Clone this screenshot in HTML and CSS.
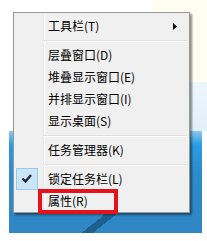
FILE: index.html
```html
<!DOCTYPE html>
<html>
<head>
<meta charset="utf-8">
<link rel="stylesheet" href="styles.css">
</head>
<body>
<div class="scene">
  <div class="menu">
    <div class="item">
      <span></span>
      <span class="label">工具栏(T)</span>
      <svg class="arrow" width="4" height="7" viewBox="0 0 4 7"><path d="M0 0 L4 3.5 L0 7 Z" fill="#000"/></svg>
    </div>
    <div class="sep"></div>
    <div class="item"><span></span><span class="label">层叠窗口(D)</span></div>
    <div class="item"><span></span><span class="label">堆叠显示窗口(E)</span></div>
    <div class="item"><span></span><span class="label">并排显示窗口(I)</span></div>
    <div class="item"><span></span><span class="label">显示桌面(S)</span></div>
    <div class="sep"></div>
    <div class="item"><span></span><span class="label">任务管理器(K)</span></div>
    <div class="sep"></div>
    <div class="item">
      <span class="check"><svg width="20" height="20" viewBox="0 0 20 20"><path d="M5.5 9.5 L8.5 12.5 L14 6" fill="none" stroke="#1b2a3a" stroke-width="2.4"/></svg></span>
      <span class="label">锁定任务栏(L)</span>
    </div>
    <div class="item marked"><span></span><span class="label">属性(R)</span><span class="highlight"></span></div>
  </div>
</div>
</body>
</html>
```

FILE: styles.css
```css
* { box-sizing: border-box; }
html, body { margin: 0; padding: 0; background: #fff; }
.scene {
  width: 207px;
  height: 241px;
  padding: 12px 0 0 13px;
  overflow: hidden;
  background:
    linear-gradient(141deg, transparent 42%, #1f5f8f 42%, #1f5f8f 60%, transparent 60%) 80px 213px / 38px 20px no-repeat,
    linear-gradient(#8cc8ee, #2a9ce2 14px, #2d8ccd 40%, #2f86c3) 9px 131px / 193px 102px no-repeat,
    linear-gradient(#eef6fc, #e2f0fa) 150px 82px / 57px 49px no-repeat,
    linear-gradient(#fffcf0, #fffcf0) 152px 0 / 55px 82px no-repeat,
    #fff;
}
.menu {
  width: 177px;
  height: 201px;
  padding-top: 2px;
  border: 1px solid #979797;
  background:
    linear-gradient(to right, transparent 29px, #e2e3e3 29px, #e2e3e3 30px, #fff 30px, #fff 31px, transparent 31px),
    #f0f0f0;
  box-shadow: 2px 2px 2px rgba(0, 0, 0, 0.45);
  font-family: "Noto Sans CJK SC", "Microsoft YaHei", sans-serif;
  font-size: 12px;
  color: #000;
}
.item {
  position: relative;
  height: 22px;
  display: grid;
  grid-template-columns: 22px 1fr auto;
  column-gap: 10px;
  align-items: center;
  padding: 0 12px 0 2px;
}
.label {
  line-height: 22px;
  white-space: nowrap;
}
.arrow { display: block; }
.sep {
  height: 2px;
  margin: 3px 2px 2px 29px;
  border-top: 1px solid #e0e0e0;
  border-bottom: 1px solid #fff;
}
.check {
  width: 22px;
  height: 22px;
  border: 1px solid #99c9ef;
  background: #cde5f8;
  display: flex;
  align-items: center;
  justify-content: center;
}
.check svg { display: block; }
.highlight {
  position: absolute;
  left: 24px;
  top: -1px;
  width: 80px;
  height: 25px;
  border: 4px solid #e5121c;
}
```
